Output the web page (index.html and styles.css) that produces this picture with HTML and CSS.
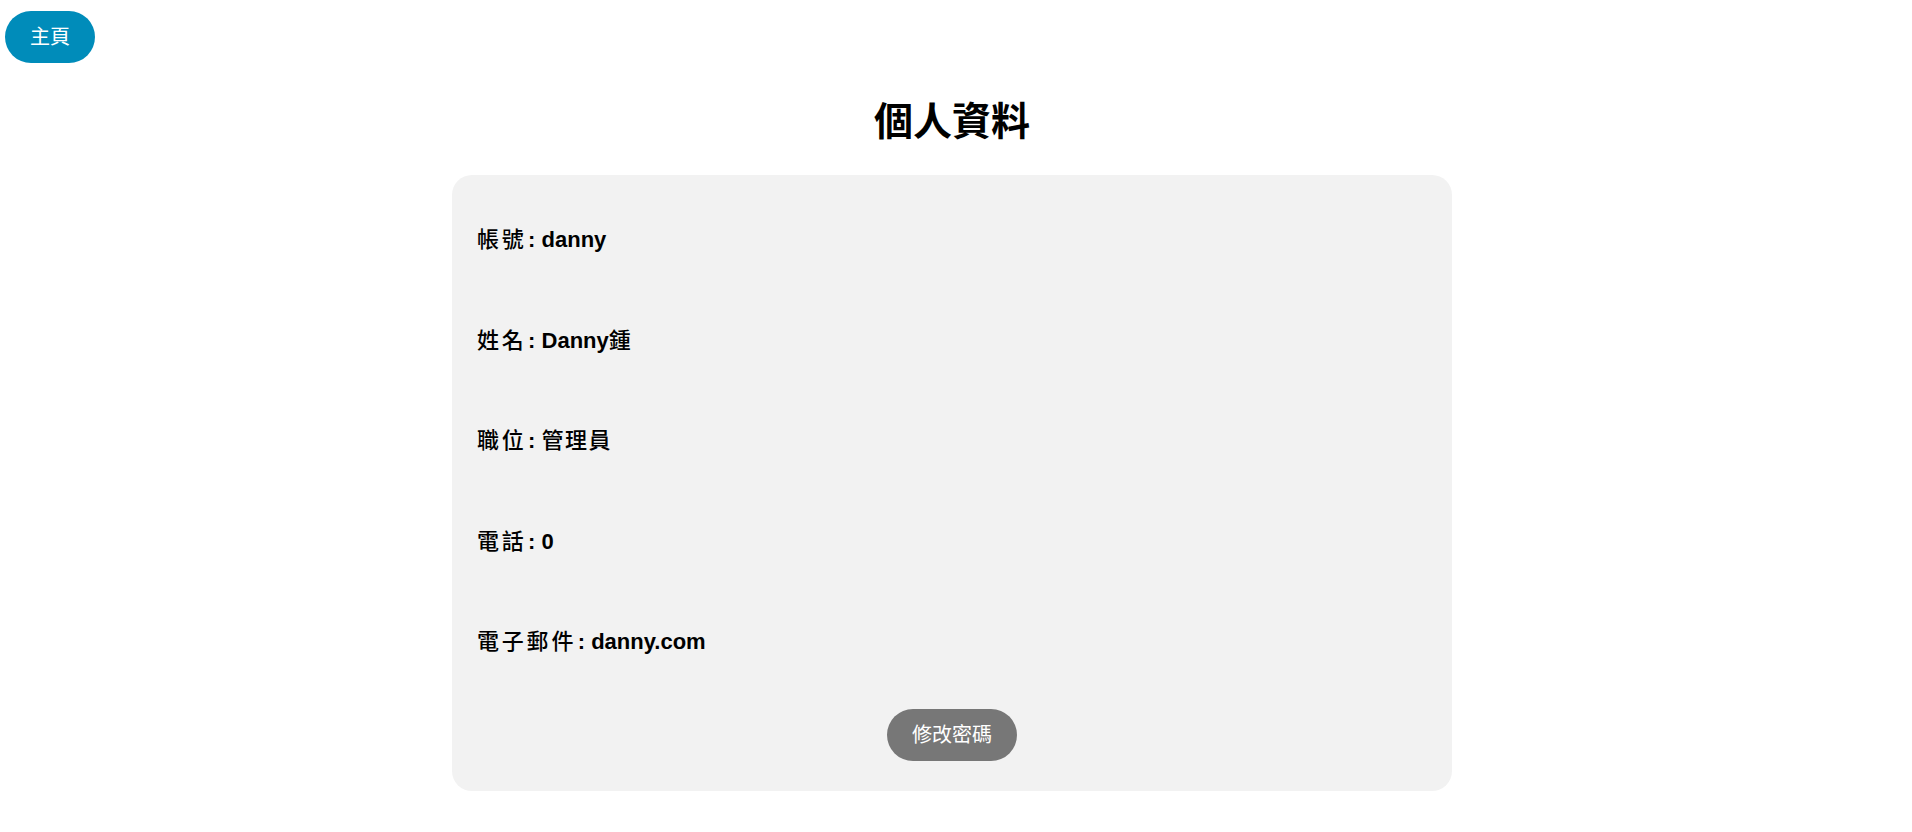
FILE: index.html
```html
<!DOCTYPE html>
<html lang="zh-Hant">
<head>
<meta charset="utf-8">
<title>個人資料</title>
<link rel="stylesheet" href="styles.css">
</head>
<body>
<div class="page">
  <header class="topbar">
    <button class="btn btn-home">主頁</button>
  </header>
  <main class="content">
    <h1 class="title">個人資料</h1>
    <section class="card">
      <div class="rows">
        <p class="row"><span class="label">帳號</span>: danny</p>
        <p class="row"><span class="label">姓名</span>: Danny<span class="cjk">鍾</span></p>
        <p class="row"><span class="label">職位</span>: <span class="cjk">管理員</span></p>
        <p class="row"><span class="label">電話</span>: 0</p>
        <p class="row"><span class="label">電子郵件</span>: danny.com</p>
      </div>
      <div class="actions">
        <button class="btn btn-gray">修改密碼</button>
      </div>
    </section>
  </main>
</div>
</body>
</html>
```
FILE: styles.css
```css
html, body {
  margin: 0;
  padding: 0;
  background: #ffffff;
}
body {
  font-family: "Liberation Sans", "Noto Sans CJK TC", sans-serif;
  color: #000;
}
.page {
  padding-right: 8px;
}
.topbar {
  padding: 11px 0 0 5px;
  display: flex;
}
.btn {
  font-family: "Liberation Sans", "Noto Sans CJK TC", sans-serif;
  font-size: 20px;
  line-height: 28px;
  color: #fff;
  border: none;
  border-radius: 26px;
  padding: 12px 25px;
  cursor: pointer;
}
.btn-home {
  background: #008cba;
}
.btn-gray {
  background: #777777;
}
.content {
  display: flex;
  flex-direction: column;
  align-items: center;
}
.title {
  margin: 34px 0 0;
  font-size: 39px;
  line-height: 50px;
  font-weight: bold;
}
.card {
  margin-top: 28px;
  width: 1000px;
  box-sizing: border-box;
  background: #f2f2f2;
  border-radius: 20px;
  padding: 49px 25px 30px;
}
.rows {
  display: flex;
  flex-direction: column;
  gap: 68.5px;
}
.row {
  margin: 0;
  font-size: 22px;
  line-height: 32px;
  font-weight: bold;
}
.label {
  font-weight: 500;
  letter-spacing: 2.8px;
  margin-right: 1.5px;
}
.cjk {
  font-weight: 500;
  letter-spacing: 1.5px;
}
.actions {
  margin-top: 51px;
  display: flex;
  justify-content: center;
}
```
